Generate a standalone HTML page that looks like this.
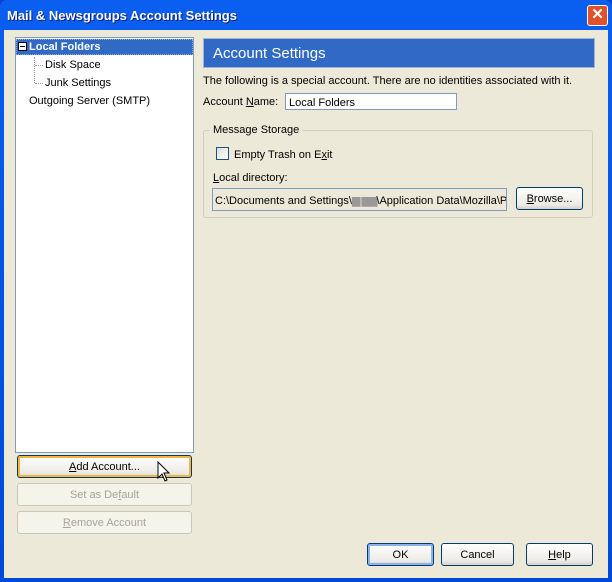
<!DOCTYPE html>
<html><head><style>
*{margin:0;padding:0;box-sizing:border-box}
body{width:612px;height:582px;overflow:hidden;font-family:"Liberation Sans",sans-serif;font-size:11px;color:#000;background:#0842d0;position:relative}
.win{position:absolute;left:0;top:0;width:612px;height:582px;background:linear-gradient(#0a5ff0,#0049d9);border-radius:7px 7px 0 0}
.title{position:absolute;left:7px;top:8px;color:#fff;font-weight:bold;font-size:13px;text-shadow:1px 1px #0a1e7a}
.close{position:absolute;left:587px;top:5px;width:21px;height:21px;background:#e0512c;border:1px solid #fff;border-radius:3px;color:#fff;font-size:15px;font-weight:bold;text-align:center;line-height:18px}
.body{position:absolute;left:4px;top:30px;width:604px;height:548px;background:#ece9d8}
.a{position:absolute}
.tree{left:15px;top:37px;width:179px;height:416px;background:#fff;border:1px solid #7f9db9}
.btn{position:absolute;border:1px solid #003c74;border-radius:3px;background:linear-gradient(#fff,#ecebe6 80%,#d6d0c5);text-align:center;line-height:23px}
.dis{border-color:#c9c7ba;background:#f5f4ea;color:#a6a49a}
u{text-decoration:underline}
</style></head><body>
<div class="win"></div>
<div class="title">Mail &amp; Newsgroups Account Settings</div>
<div class="close">✕</div>
<div class="body"></div>
<div class="a tree"></div>
<div class="a" style="left:16px;top:39px;width:177px;height:16px;background:#316ac5;border:1px dotted #8da8e0"></div>
<div class="a" style="left:18px;top:42px;width:9px;height:9px;background:#fff;border:1px solid #000"></div>
<div class="a" style="left:20px;top:46px;width:5px;height:1px;background:#000"></div>
<div class="a" style="left:29px;top:41px;color:#fff;font-weight:bold">Local Folders</div>
<div class="a" style="left:34px;top:57px;width:1px;height:26px;border-left:1px dotted #999"></div>
<div class="a" style="left:35px;top:65px;width:8px;border-top:1px dotted #999"></div>
<div class="a" style="left:35px;top:83px;width:8px;border-top:1px dotted #999"></div>
<div class="a" style="left:45px;top:59px">Disk Space</div>
<div class="a" style="left:45px;top:77px">Junk Settings</div>
<div class="a" style="left:29px;top:95px">Outgoing Server (SMTP)</div>

<div class="a" style="left:203px;top:38px;width:392px;height:30px;background:#3169c6;border:1px solid #9fb3d8;color:#fff;font-size:15px;padding:6px 0 0 9px">Account Settings</div>
<div class="a" style="left:203px;top:75px">The following is a special account. There are no identities associated with it.</div>
<div class="a" style="left:203px;top:96px">Account <u>N</u>ame:</div>
<div class="a" style="left:285px;top:93px;width:172px;height:17px;background:#fff;border:1px solid #7f9db9;padding:3px 0 0 3px">Local Folders</div>

<div class="a" style="left:203px;top:130px;width:390px;height:88px;border:1px solid #d0d0bf;border-radius:3px"></div>
<div class="a" style="left:210px;top:124px;background:#ece9d8;padding:0 3px">Message Storage</div>
<div class="a" style="left:216px;top:147px;width:13px;height:13px;border:1px solid #1c5180;background:linear-gradient(135deg,#dcdcd7,#fff)"></div>
<div class="a" style="left:234px;top:149px">Empty Trash on E<u>x</u>it</div>
<div class="a" style="left:213px;top:172px"><u>L</u>ocal directory:</div>
<div class="a" style="left:212px;top:188px;width:295px;height:23px;background:#ece9d8;border:1px solid #7f9db9;padding:5px 0 0 2px;white-space:nowrap;overflow:hidden">C:\Documents and Settings\<span style="color:#999;letter-spacing:-1px">▆ ▆▆</span>\Application Data\Mozilla\Pr</div>
<div class="btn" style="left:516px;top:187px;width:67px;height:23px"><u>B</u>rowse...</div>

<div class="btn" style="left:17px;top:455px;width:175px;height:23px;box-shadow:inset 0 0 0 2px #f8b33a"><u>A</u>dd Account...</div>
<div class="btn dis" style="left:17px;top:483px;width:175px;height:23px">Set as De<u>f</u>ault</div>
<div class="btn dis" style="left:17px;top:511px;width:175px;height:23px"><u>R</u>emove Account</div>
<svg class="a" style="left:157px;top:461px" width="14" height="24" viewBox="0 0 14 24"><path d="M1 1V17L5 13L8 20L10 19L7 12H12Z" fill="#fff" stroke="#000"/></svg>

<div class="btn" style="left:367px;top:543px;width:67px;height:23px;box-shadow:inset 0 0 0 2px #8bb1ee">OK</div>
<div class="btn" style="left:441px;top:543px;width:73px;height:23px">Cancel</div>
<div class="btn" style="left:526px;top:543px;width:67px;height:23px"><u>H</u>elp</div>
</body></html>
